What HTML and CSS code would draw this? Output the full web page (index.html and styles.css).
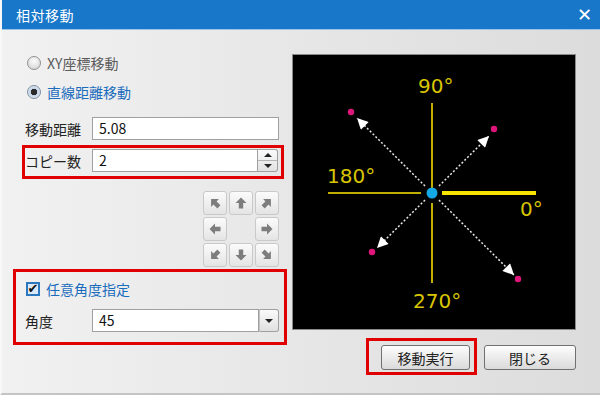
FILE: index.html
```html
<!DOCTYPE html>
<html lang="ja">
<head>
  <meta charset="UTF-8">
  <meta name="viewport" content="width=device-width, initial-scale=1.0">
  <title>相対移動</title>
  <link rel="stylesheet" href="styles.css">
</head>
<body>
  <div class="window">
    <div class="titlebar">
      <span class="title">相対移動</span>
      <span class="close">✕</span>
    </div>

    <div class="main">
      <div class="form">
        <label class="opt opt-first"><span class="radio"></span>XY座標移動</label>
        <label class="opt opt-on"><span class="radio checked"></span>直線距離移動</label>

        <div class="field field-dist">
          <span class="lbl">移動距離</span>
          <div class="box wide">5.08</div>
        </div>

        <div class="mark mark-copy">
          <div class="field">
            <span class="lbl">コピー数</span>
            <div class="box spin">2</div>
            <div class="spinner">
              <span class="sbtn"><i class="tri up"></i></span>
              <span class="sbtn"><i class="tri down"></i></span>
            </div>
          </div>
        </div>

        <div class="pad">
          <span class="pbtn"><svg class="ar r-315" viewBox="0 0 12 12"><path d="M6 0.5 L11.5 6 H8.2 V11.5 H3.8 V6 H0.5 Z"/></svg></span>
          <span class="pbtn"><svg class="ar" viewBox="0 0 12 12"><path d="M6 0.5 L11.5 6 H8.2 V11.5 H3.8 V6 H0.5 Z"/></svg></span>
          <span class="pbtn"><svg class="ar r-45" viewBox="0 0 12 12"><path d="M6 0.5 L11.5 6 H8.2 V11.5 H3.8 V6 H0.5 Z"/></svg></span>
          <span class="pbtn"><svg class="ar r-270" viewBox="0 0 12 12"><path d="M6 0.5 L11.5 6 H8.2 V11.5 H3.8 V6 H0.5 Z"/></svg></span>
          <span class="pgap"></span>
          <span class="pbtn"><svg class="ar r-90" viewBox="0 0 12 12"><path d="M6 0.5 L11.5 6 H8.2 V11.5 H3.8 V6 H0.5 Z"/></svg></span>
          <span class="pbtn"><svg class="ar r-225" viewBox="0 0 12 12"><path d="M6 0.5 L11.5 6 H8.2 V11.5 H3.8 V6 H0.5 Z"/></svg></span>
          <span class="pbtn"><svg class="ar r-180" viewBox="0 0 12 12"><path d="M6 0.5 L11.5 6 H8.2 V11.5 H3.8 V6 H0.5 Z"/></svg></span>
          <span class="pbtn"><svg class="ar r-135" viewBox="0 0 12 12"><path d="M6 0.5 L11.5 6 H8.2 V11.5 H3.8 V6 H0.5 Z"/></svg></span>
        </div>

        <div class="mark mark-angle">
          <label class="opt opt-on chk-row"><span class="check">&#x2714;</span>任意角度指定</label>
          <div class="field field-angle">
            <span class="lbl">角度</span>
            <div class="box drop">45</div>
            <span class="dbtn"><i class="tri down"></i></span>
          </div>
        </div>
      </div>

      <div class="side">
        <svg class="canvas" width="284" height="276" viewBox="292 54 284 276">
          <defs>
            <marker id="head" viewBox="0 0 10 10" refX="10" refY="5" markerWidth="13" markerHeight="11" markerUnits="userSpaceOnUse" orient="auto">
              <path d="M0,0 L10,5 L0,10 z" fill="#fff"/>
            </marker>
          </defs>
          <rect x="292.5" y="54.5" width="283" height="275" fill="#000" stroke="#8a8a8a"/>
          <line x1="432" y1="103" x2="432" y2="190" stroke="#c2ae00" stroke-width="2"/>
          <line x1="432" y1="203" x2="432" y2="283" stroke="#c2ae00" stroke-width="2"/>
          <line x1="328" y1="193" x2="421" y2="193" stroke="#c2ae00" stroke-width="2"/>
          <line x1="442" y1="193" x2="536" y2="193" stroke="#f7e400" stroke-width="4"/>

          <g stroke="#e8e8e8" stroke-width="1.5" stroke-dasharray="2 2" marker-end="url(#head)">
            <line x1="425" y1="186" x2="357" y2="118"/>
            <line x1="439" y1="186" x2="489" y2="136"/>
            <line x1="425" y1="200" x2="377" y2="248"/>
            <line x1="439" y1="200" x2="514" y2="275"/>
          </g>

          <g fill="#e0157c">
            <circle cx="351" cy="112" r="3.2"/>
            <circle cx="494" cy="129" r="3.2"/>
            <circle cx="372" cy="252" r="3.2"/>
            <circle cx="518" cy="279" r="3.2"/>
          </g>
          <circle cx="432" cy="193" r="5.5" fill="#14a9e6"/>

          <g class="deg">
            <text x="418" y="93">90°</text>
            <text x="327" y="183">180°</text>
            <text x="520" y="216">0°</text>
            <text x="413" y="308">270°</text>
          </g>
        </svg>

        <div class="actions">
          <div class="mark mark-btn">
            <button class="btn run">移動実行</button>
          </div>
          <button class="btn shut">閉じる</button>
        </div>
      </div>
    </div>
  </div>
</body>
</html>
```

FILE: styles.css
```css
* { box-sizing: border-box; }
body { margin: 0; font-family: "Noto Sans CJK JP", "Noto Sans", sans-serif; font-size: 14px; color: #222; }

.window { width: 600px; height: 395px; background: linear-gradient(to right, #f1f1f1, #dcdcdc); border-left: 2px solid #f8f8f8; border-bottom: 2px solid #c4c4c4; overflow: hidden; }
.titlebar { height: 30px; margin-left: -2px; background: #1877c9; border-bottom: 1px solid #9cc3e6; display: flex; align-items: center; justify-content: space-between; padding: 0 8px 0 16px; color: #fff; }
.title { font-size: 14px; letter-spacing: 0.5px; }
.close { font-size: 18px; font-weight: bold; font-family: "DejaVu Sans", sans-serif; }

.main { display: flex; }
.form { width: 274px; margin-left: 11px; display: flex; flex-direction: column; }

.opt { height: 18px; display: flex; align-items: center; gap: 6px; padding-left: 14px; color: #5c5c5c; }
.opt-first { margin-top: 24px; }
.opt-on { color: #1b6cbd; margin-top: 11px; }
.radio { width: 14px; height: 14px; border-radius: 50%; border: 1px solid #909090; background: radial-gradient(circle at 50% 35%, #fdfdfd, #cdcdcd); }
.radio.checked { border-color: #7e8ea0; background: radial-gradient(circle, #2b2b2b 0 3px, #c2d3e6 3.5px, #eef2f6); }

.field { display: flex; align-items: center; height: 23px; padding-left: 12px; }
.field-dist { margin-top: 16px; }
.lbl { width: 67px; }
.box { height: 23px; background: #fff; border: 1px solid #a0a0a0; padding-left: 6px; line-height: 21px; font-size: 14px; color: #111; }
.wide { width: 187px; }

.mark { border: 3px solid #e00000; }
.mark-copy { margin: 5px 3px 0 9px; padding: 1px 0 4px; }
.mark-copy .field { padding-left: 0; }
.spin { width: 166px; }
.spinner { display: flex; flex-direction: column; width: 20px; height: 23px; border: 1px solid #a0a0a0; border-left: none; border-radius: 0 3px 3px 0; background: linear-gradient(#fafafa, #e2e2e2); }
.sbtn { flex: 1; display: flex; align-items: center; justify-content: center; }
.sbtn + .sbtn { border-top: 1px solid #b4b4b4; }
.tri { width: 0; height: 0; border-left: 4px solid transparent; border-right: 4px solid transparent; }
.tri.up { border-bottom: 4px solid #222; }
.tri.down { border-top: 4px solid #222; }

.pad { align-self: flex-end; margin: 12px 8px 0 0; display: grid; grid-template-columns: repeat(3, 24px); grid-auto-rows: 24px; gap: 2px; }
.pbtn { border: 1px solid #c9c9c9; border-radius: 3px; background: linear-gradient(#fbfbfb, #e4e4e4); display: flex; align-items: center; justify-content: center; }
.ar { width: 12px; height: 12px; fill: #7d7d7d; }
.r-45 { transform: rotate(45deg); }
.r-90 { transform: rotate(90deg); }
.r-135 { transform: rotate(135deg); }
.r-180 { transform: rotate(180deg); }
.r-225 { transform: rotate(225deg); }
.r-270 { transform: rotate(270deg); }
.r-315 { transform: rotate(315deg); }

.mark-angle { margin-top: 2px; height: 76px; }
.chk-row { margin-top: 8px; padding-left: 10px; }
.check { width: 14px; height: 14px; border: 2px solid #2a78c0; background: #dbe8f5; color: #111; font-size: 13px; line-height: 10px; display: flex; align-items: center; justify-content: center; font-family: "DejaVu Sans", sans-serif; }
.field-angle { margin-top: 11px; padding-left: 9px; }
.drop { width: 167px; }
.dbtn { width: 20px; height: 23px; border: 1px solid #a0a0a0; border-left-color: #c0c0c0; border-radius: 0 3px 3px 0; background: linear-gradient(#fafafa, #e0e0e0); display: flex; align-items: center; justify-content: center; }

.side { width: 284px; margin-left: 5px; }
.canvas { display: block; margin-top: 24px; }
.deg { fill: #d9c600; font-family: "DejaVu Sans", sans-serif; font-size: 20px; }

.actions { display: flex; justify-content: flex-end; align-items: flex-start; gap: 7px; margin-top: 8px; }
.mark-btn { padding: 4px 4px 2px 12px; }
.btn { height: 25px; border: 1px solid #707070; border-radius: 3px; background: linear-gradient(#fdfdfd, #dadada); font-family: "Noto Sans CJK JP", sans-serif; font-size: 14px; color: #222; padding: 0; }
.run { width: 89px; }
.shut { width: 92px; margin-top: 7px; }
```
